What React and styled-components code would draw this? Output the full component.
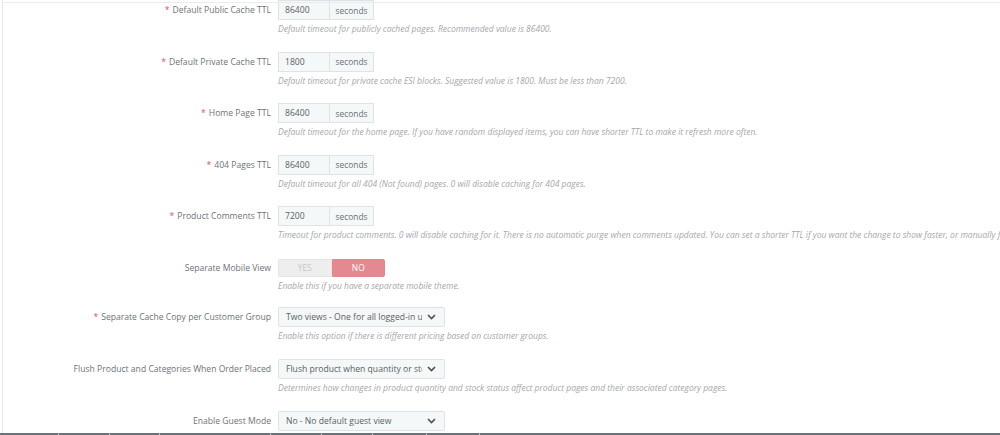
import React from "react"
import styled, { createGlobalStyle } from "styled-components"

const GlobalStyle = createGlobalStyle`
  html, body {
    margin: 0;
    padding: 0;
    background: #ffffff;
    overflow: hidden;
  }
  body {
    font-family: "Open Sans", "DejaVu Sans", sans-serif;
  }
`

const Page = styled.div`
  width: 1000px;
  height: 435px;
  display: flex;
  flex-direction: column;
  overflow: hidden;
`

const Panel = styled.div`
  flex: 1;
  margin-left: 2px;
  border-left: 1px solid #e4e7ea;
  position: relative;
  overflow: hidden;
`

const TopLine = styled.div`
  position: absolute;
  left: 0;
  right: 0;
  top: 2px;
  height: 1px;
  background: #e9ecee;
`

const Form = styled.div`
  display: flex;
  flex-direction: column;
`

const Group = styled.div`
  display: grid;
  grid-template-columns: 268px 1fr;
  column-gap: 7px;
  height: ${(p) => p.$h || 51.6}px;
`

const Label = styled.label`
  height: 20px;
  display: flex;
  align-items: center;
  justify-content: flex-end;
  font-size: 8.6px;
  color: #6e7378;
  white-space: nowrap;
`

const Star = styled.span`
  color: #e0525c;
  margin-right: 3px;
`

const Control = styled.div`
  display: flex;
  flex-direction: column;
  min-width: 0;
`

const InputGroup = styled.div`
  display: flex;
  height: 20px;
`

const Input = styled.div`
  width: 52px;
  box-sizing: border-box;
  border: 1px solid #dfe3e6;
  background: #f5f8f9;
  font-size: 8.6px;
  color: #5a5f63;
  display: flex;
  align-items: center;
  padding-left: 6px;
`

const Addon = styled.div`
  width: 44px;
  box-sizing: border-box;
  border: 1px solid #dfe3e6;
  border-left: none;
  background: #f5f8f9;
  font-size: 8.4px;
  color: #6a6f73;
  display: flex;
  align-items: center;
  justify-content: center;
`

const Help = styled.p`
  margin: 3px 0 0;
  font-size: 8.5px;
  line-height: 12px;
  font-style: italic;
  color: #a5a8ab;
  white-space: nowrap;
`

const Switch = styled.div`
  display: flex;
  height: 18px;
  width: 107px;
  margin-top: 1px;
`

const SwitchOption = styled.div`
  flex: 1;
  box-sizing: border-box;
  display: flex;
  align-items: center;
  justify-content: center;
  font-size: 8.4px;
  border: 1px solid ${(p) => (p.$active ? "#df8a90" : "#e2e4e6")};
  background: ${(p) => (p.$active ? "#e3898f" : "#eeeeee")};
  color: ${(p) => (p.$active ? "#ffffff" : "#c7c9cb")};
  border-radius: ${(p) => (p.$active ? "0 2px 2px 0" : "2px 0 0 2px")};
`

const Select = styled.div`
  width: 167px;
  height: 20px;
  box-sizing: border-box;
  border: 1px solid #dfe3e6;
  border-radius: 2px;
  background: #f5f8f9;
  display: flex;
  align-items: center;
  padding: 0 8px 0 7px;
  font-size: 8.6px;
  color: #5a5f63;
`

const SelectText = styled.span`
  flex: 1;
  overflow: hidden;
  white-space: nowrap;
  max-width: ${(p) => p.$max || 140}px;
`

const Chevron = styled.svg`
  margin-left: auto;
  flex: none;
`

const BottomBar = styled.div`
  height: 2px;
  background: #69737a;
  display: flex;
`

const BarTick = styled.span`
  width: 1px;
  height: 2px;
  background: #b7bec3;
  margin-left: ${(p) => p.$gap}px;
`

const ChevronIcon = () => (
  <Chevron width="9" height="6" viewBox="0 0 9 6">
    <path d="M1 1 L4.5 4.5 L8 1" fill="none" stroke="#4a4f54" strokeWidth="1.6" />
  </Chevron>
)

const ttlRows = [
  {
    label: "Default Public Cache TTL",
    value: "86400",
    help: "Default timeout for publicly cached pages. Recommended value is 86400.",
  },
  {
    label: "Default Private Cache TTL",
    value: "1800",
    help: "Default timeout for private cache ESI blocks. Suggested value is 1800. Must be less than 7200.",
  },
  {
    label: "Home Page TTL",
    value: "86400",
    help: "Default timeout for the home page. If you have random displayed items, you can have shorter TTL to make it refresh more often.",
  },
  {
    label: "404 Pages TTL",
    value: "86400",
    help: "Default timeout for all 404 (Not found) pages. 0 will disable caching for 404 pages.",
  },
  {
    label: "Product Comments TTL",
    value: "7200",
    help: "Timeout for product comments. 0 will disable caching for it. There is no automatic purge when comments updated. You can set a shorter TTL if you want the change to show faster, or manually flush the cache.",
  },
]

const ticks = [58, 50, 49, 110, 50, 50, 53, 52]

const App = () => {
  return (
    <>
      <GlobalStyle />
      <Page>
        <Panel>
          <TopLine />
          <Form>
            {ttlRows.map((row, i) => (
              <Group key={i}>
                <Label>
                  <Star>*</Star>
                  {row.label}
                </Label>
                <Control>
                  <InputGroup>
                    <Input>{row.value}</Input>
                    <Addon>seconds</Addon>
                  </InputGroup>
                  <Help>{row.help}</Help>
                </Control>
              </Group>
            ))}

            <Group $h={49.5}>
              <Label>Separate Mobile View</Label>
              <Control>
                <Switch>
                  <SwitchOption>YES</SwitchOption>
                  <SwitchOption $active>NO</SwitchOption>
                </Switch>
                <Help>Enable this if you have a separate mobile theme.</Help>
              </Control>
            </Group>

            <Group>
              <Label>
                <Star>*</Star>
                Separate Cache Copy per Customer Group
              </Label>
              <Control>
                <Select>
                  <SelectText $max={136}>Two views - One for all logged-in users</SelectText>
                  <ChevronIcon />
                </Select>
                <Help>Enable this option if there is different pricing based on customer groups.</Help>
              </Control>
            </Group>

            <Group>
              <Label>Flush Product and Categories When Order Placed</Label>
              <Control>
                <Select>
                  <SelectText $max={136}>Flush product when quantity or stock status change</SelectText>
                  <ChevronIcon />
                </Select>
                <Help>
                  Determines how changes in product quantity and stock status affect product pages and their associated category pages.
                </Help>
              </Control>
            </Group>

            <Group>
              <Label>Enable Guest Mode</Label>
              <Control>
                <Select>
                  <SelectText>No - No default guest view</SelectText>
                  <ChevronIcon />
                </Select>
              </Control>
            </Group>
          </Form>
        </Panel>
        <BottomBar>
          {ticks.map((g, i) => (
            <BarTick key={i} $gap={g} />
          ))}
        </BottomBar>
      </Page>
    </>
  )
}

export default App
